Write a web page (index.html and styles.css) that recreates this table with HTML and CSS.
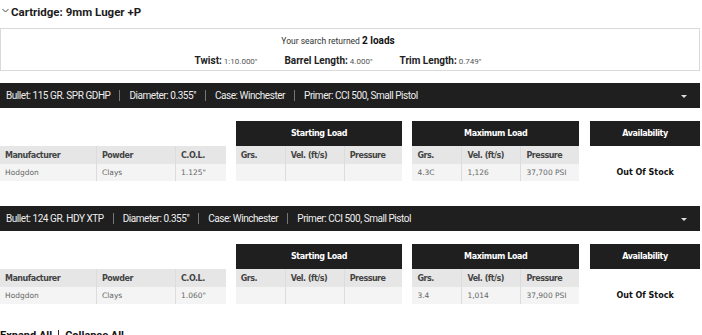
FILE: index.html
```html
<!DOCTYPE html>
<html lang="en">
<head>
    <meta charset="UTF-8">
    <title>Load Data - 9mm Luger +P</title>
    <link rel="stylesheet" href="styles.css">
</head>
<body>
    <div class="page">
        <h3 class="cartridge">
            <svg class="chev" width="7" height="5" viewBox="0 0 7 5"><path d="M0.5 1 L3.5 4 L6.5 1" fill="none" stroke="#333" stroke-width="0.9"/></svg>
            Cartridge: 9mm Luger +P
        </h3>

        <div class="summary">
            <p class="found">Your search returned <b>2 loads</b></p>
            <div class="specs">
                <span><b>Twist:</b> 1:10.000"</span>
                <span><b>Barrel Length:</b> 4.000"</span>
                <span><b>Trim Length:</b> 0.749"</span>
            </div>
        </div>

        <!-- load 1 -->
        <div class="bullet-bar">
            <span>Bullet: 115 GR. SPR GDHP</span>
            <span>Diameter: 0.355"</span>
            <span>Case: Winchester</span>
            <span>Primer: CCI 500, Small Pistol</span>
            <i class="caret"></i>
        </div>
        <div class="load">
            <div class="group info">
                <div class="cap"></div>
                <table>
                    <tr><th class="w-man">Manufacturer</th><th class="w-pow">Powder</th><th>C.O.L.</th></tr>
                    <tr><td>Hodgdon</td><td>Clays</td><td>1.125"</td></tr>
                </table>
            </div>
            <div class="group">
                <div class="cap dark">Starting Load</div>
                <table>
                    <tr><th class="w-grs">Grs.</th><th class="w-vel">Vel. (ft/s)</th><th>Pressure</th></tr>
                    <tr><td></td><td></td><td></td></tr>
                </table>
            </div>
            <div class="group">
                <div class="cap dark">Maximum Load</div>
                <table>
                    <tr><th class="w-grs">Grs.</th><th class="w-vel">Vel. (ft/s)</th><th>Pressure</th></tr>
                    <tr><td>4.3C</td><td>1,126</td><td>37,700 PSI</td></tr>
                </table>
            </div>
            <div class="group avail">
                <div class="cap dark">Availability</div>
                <div class="spacer"></div>
                <div class="stock">Out Of Stock</div>
            </div>
        </div>

        <!-- load 2 -->
        <div class="bullet-bar">
            <span>Bullet: 124 GR. HDY XTP</span>
            <span>Diameter: 0.355"</span>
            <span>Case: Winchester</span>
            <span>Primer: CCI 500, Small Pistol</span>
            <i class="caret"></i>
        </div>
        <div class="load">
            <div class="group info">
                <div class="cap"></div>
                <table>
                    <tr><th class="w-man">Manufacturer</th><th class="w-pow">Powder</th><th>C.O.L.</th></tr>
                    <tr><td>Hodgdon</td><td>Clays</td><td>1.060"</td></tr>
                </table>
            </div>
            <div class="group">
                <div class="cap dark">Starting Load</div>
                <table>
                    <tr><th class="w-grs">Grs.</th><th class="w-vel">Vel. (ft/s)</th><th>Pressure</th></tr>
                    <tr><td></td><td></td><td></td></tr>
                </table>
            </div>
            <div class="group">
                <div class="cap dark">Maximum Load</div>
                <table>
                    <tr><th class="w-grs">Grs.</th><th class="w-vel">Vel. (ft/s)</th><th>Pressure</th></tr>
                    <tr><td>3.4</td><td>1,014</td><td>37,900 PSI</td></tr>
                </table>
            </div>
            <div class="group avail">
                <div class="cap dark">Availability</div>
                <div class="spacer"></div>
                <div class="stock">Out Of Stock</div>
            </div>
        </div>

        <div class="toggles">
            <a>Expand All</a><span class="sep"></span><a>Collapse All</a>
        </div>
    </div>
</body>
</html>
```

FILE: styles.css
```css
body {
    margin: 0;
    background: #fff;
    color: #222;
    font-family: Roboto, 'Liberation Sans', sans-serif;
}
.page {
    width: 700px;
}
.cartridge {
    margin: 0;
    padding: 3px 0 0 2px;
    height: 17px;
    font-size: 11.5px;
    font-weight: bold;
    display: flex;
    align-items: center;
    color: #1c1c1c;
}
.chev {
    margin-right: 2px;
    position: relative;
    top: -1px;
}
.summary {
    margin-top: 8px;
    height: 36px;
    border: 1px solid #d9d9d9;
    padding: 5px 24px 0 0;
    text-align: center;
}
.found {
    margin: 0;
    font-size: 8.5px;
    color: #333;
    line-height: 13px;
}
.found b {
    font-size: 10px;
    color: #111;
}
.specs {
    margin-top: 7px;
    display: flex;
    justify-content: center;
    gap: 27px;
    font-size: 8px;
    color: #555;
}
.specs b {
    font-size: 10px;
    color: #222;
}
.bullet-bar {
    margin-top: 12px;
    height: 25px;
    background: #1f1f1f;
    color: #eee;
    display: flex;
    align-items: center;
    padding-left: 6px;
    font-size: 10px;
    letter-spacing: -0.45px;
    position: relative;
}
.bullet-bar span + span {
    border-left: 1px solid #777;
    margin-left: 9px;
    padding-left: 9px;
    line-height: 11px;
}
.caret {
    position: absolute;
    right: 13px;
    top: 12px;
    border-left: 3px solid transparent;
    border-right: 3px solid transparent;
    border-top: 3px solid #ddd;
}
.load {
    display: flex;
    gap: 10px;
    margin-top: 13px;
    margin-bottom: 25px;
}
.group {
    width: 167px;
}
.group.info {
    width: 226px;
}
.group.avail {
    width: 110px;
    margin-left: 1px;
}
.cap {
    height: 25px;
    font-family: 'DejaVu Sans', Verdana, sans-serif;
    font-size: 8px;
    font-weight: bold;
    letter-spacing: -0.4px;
    color: #fff;
    display: flex;
    align-items: center;
    justify-content: center;
}
.cap.dark {
    background: #1f1f1f;
}
table {
    width: 100%;
    border-collapse: collapse;
    font-family: 'DejaVu Sans', Verdana, sans-serif;
    font-size: 7.5px;
}
th, td {
    text-align: left;
    padding: 0 5px;
    border-left: 1px solid #dcdcdc;
}
th:first-child, td:first-child {
    border-left: none;
}
th {
    height: 18px;
    background: #e6e6e6;
    color: #444;
    font-weight: bold;
    font-size: 8px;
    letter-spacing: -0.5px;
}
td {
    height: 17px;
    background: #f4f4f4;
    color: #666;
}
.w-man { width: 86px; }
.w-pow { width: 68px; }
.w-grs { width: 39px; }
.w-vel { width: 48px; }
.spacer {
    height: 18px;
}
.stock {
    height: 17px;
    display: flex;
    align-items: center;
    justify-content: center;
    font-family: 'DejaVu Sans', Verdana, sans-serif;
    font-size: 8px;
    font-weight: bold;
    color: #111;
}
.toggles {
    margin-top: 0;
    display: flex;
    align-items: center;
    font-size: 11px;
    font-weight: bold;
    color: #111;
}
.toggles .sep {
    width: 1px;
    height: 12px;
    background: #333;
    margin: 0 6px;
}
```
